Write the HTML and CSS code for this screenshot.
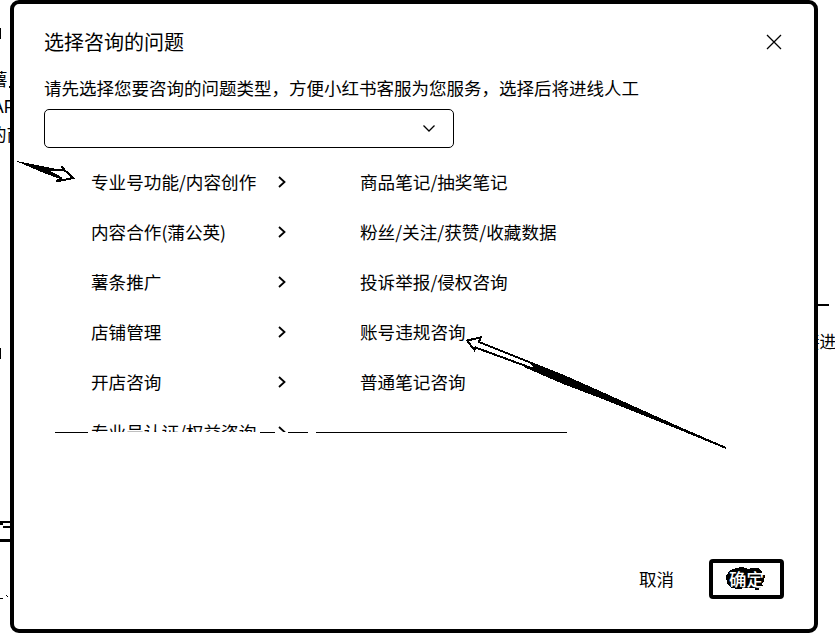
FILE: index.html
```html
<!DOCTYPE html>
<html lang="zh-CN">
<head>
<meta charset="utf-8">
<title>选择咨询的问题</title>
<link rel="stylesheet" href="styles.css">
</head>
<body>
<div class="backdrop">
  <span class="behind behind-a">薯，</span>
  <span class="behind behind-b">AP</span>
  <span class="behind behind-c">的商</span>
  <span class="behind behind-d">接进</span>
  <svg class="edges" viewBox="0 0 835 640" shape-rendering="crispEdges">
    <path d="M0 28h1v11h-1zM9 86h1v2H9zM0 348h1v11h-1zM0 521h10v2H0zM0 523h3v2H0zM3 526h7v2H3zM0 539h10v3H0zM0 598h3v1H0zM6 595h1v1H6zM7 596h1v1H7zM818 304h11v2h-11z"/>
  </svg>
</div>
<main class="dialog">
  <header class="head">
    <h1>选择咨询的问题</h1>
    <svg class="close" viewBox="0 0 16 16"><path d="M1 1l14 14M15 1L1 15"/></svg>
  </header>
  <p class="hint">请先选择您要咨询的问题类型，方便小红书客服为您服务，选择后将进线人工</p>
  <div class="select"><svg class="down" viewBox="0 0 12 7"><path d="M.5 .5L6 6L11.5 .5"/></svg></div>
  <div class="menu">
    <ul class="list primary">
      <li><span>专业号功能/内容创作</span><svg class="next" viewBox="0 0 8 12"><path d="M1 1l5.5 5L1 11"/></svg></li>
      <li><span>内容合作(蒲公英)</span><svg class="next" viewBox="0 0 8 12"><path d="M1 1l5.5 5L1 11"/></svg></li>
      <li><span>薯条推广</span><svg class="next" viewBox="0 0 8 12"><path d="M1 1l5.5 5L1 11"/></svg></li>
      <li><span>店铺管理</span><svg class="next" viewBox="0 0 8 12"><path d="M1 1l5.5 5L1 11"/></svg></li>
      <li><span>开店咨询</span><svg class="next" viewBox="0 0 8 12"><path d="M1 1l5.5 5L1 11"/></svg></li>
      <li><span>专业号认证/权益咨询</span><svg class="next" viewBox="0 0 8 12"><path d="M1 1l5.5 5L1 11"/></svg></li>
    </ul>
    <ul class="list secondary">
      <li>商品笔记/抽奖笔记</li>
      <li>粉丝/关注/获赞/收藏数据</li>
      <li>投诉举报/侵权咨询</li>
      <li>账号违规咨询</li>
      <li>普通笔记咨询</li>
    </ul>
  </div>
  <svg class="rule" viewBox="0 0 512 1" shape-rendering="crispEdges"><path d="M0 0h33v1H0zM205 0h15v1h-15zM233 0h20v1h-20zM261 0h251v1H261z"/></svg>
  <footer class="actions">
    <button class="cancel">取消</button>
    <button class="confirm">
      <svg class="blob" viewBox="0 0 40 24" shape-rendering="crispEdges"><path d="M4 3L10 1L16 0L22 2L25 1L33 1L36 5V8H39V11H38V14L36 16L37 20L33 21V23H29V21L20 21L12 22L5 21L1 16L0 9z"/></svg>
      <span>确定</span>
    </button>
  </footer>
</main>
<svg class="arrows" viewBox="0 0 835 640" shape-rendering="crispEdges">
  <path class="solid" d="M16 161L46 167L57 169L58 171L50 171L61 177L60 179L44 173L30 167z"/>
  <path class="line" d="M54 170L64 170.500L61.500 166L65 170.500L73 178L56.500 181.500L61 178L50 172"/>
  <path class="line" d="M534 364L479 342L480.500 337.500L467 340.500L474.500 350L475.500 347.500L534 369"/>
  <path class="solid" d="M524 359L563 374.500L600 391L640 409L680 427L726 447L726 449L680 430L640 414L600 398L563 384L524 367L534 367z"/>
</svg>
</body>
</html>
```
FILE: styles.css
```css
* { box-sizing: border-box; }
body {
  margin: 0;
  width: 835px;
  height: 640px;
  position: relative;
  overflow: hidden;
  background: #fff;
  color: #000;
  font-family: "Noto Sans CJK SC", sans-serif;
  font-size: 17.5px;
  font-weight: 400;
}
.backdrop { position: absolute; inset: 0; overflow: hidden; }
.behind { position: absolute; line-height: 26px; white-space: nowrap; }
.behind-a { left: -10px; top: 66px; }
.behind-b { left: -8px; top: 94px; font-family: "Liberation Sans", sans-serif; }
.behind-c { left: -11px; top: 121px; }
.behind-d { right: -1px; top: 328px; font-size: 16.5px; }
.edges { position: absolute; inset: 0; width: 835px; height: 640px; }

.dialog {
  position: relative;
  display: flex;
  flex-direction: column;
  width: 808px;
  height: 633px;
  margin-left: 10px;
  padding: 24px 30px 30px;
  border: 4px solid #000;
  border-radius: 9px;
  background: #fff;
}
.head { display: flex; justify-content: space-between; height: 30px; }
.head h1 { margin: 0; font-size: 20px; font-weight: 400; line-height: 28px; }
.close { width: 16px; height: 16px; margin: 6px 2px 0 0; }
.close path, .down path { fill: none; stroke: #000; stroke-width: 1.3; }
.hint { margin: 16px 0 8px; line-height: 27px; white-space: nowrap; }
.select {
  display: flex;
  flex: none;
  align-items: center;
  justify-content: flex-end;
  width: 410px;
  height: 39px;
  padding-right: 18px;
  border: 1px solid #000;
  border-radius: 5px;
}
.down { width: 12px; height: 7px; }
.menu {
  display: flex;
  flex: none;
  height: 284px;
  padding: 8px 0 0 47px;
  overflow: hidden;
  font-size: 17.6px;
}
.list { margin: 0; padding: 0; list-style: none; }
.list li { display: flex; align-items: center; height: 50px; white-space: nowrap; }
.primary { width: 269px; }
.primary li { justify-content: space-between; padding-right: 74px; }
.next { width: 8px; height: 12px; margin-top: 2px; }
.next path { fill: none; stroke: #000; stroke-width: 1.8; }
.rule { flex: none; width: 512px; height: 1px; margin-left: 11px; }
.actions {
  display: flex;
  align-items: center;
  justify-content: flex-end;
  gap: 35px;
  margin-top: auto;
}
button {
  padding: 0;
  border: 0;
  background: none;
  color: inherit;
  font: inherit;
}
.cancel { padding-bottom: 2px; }
.confirm {
  position: relative;
  width: 75px;
  height: 40px;
  padding-bottom: 2px;
  border: 4px solid #000;
  border-radius: 4px;
}
.confirm span { position: relative; color: #fff; font-weight: 500; }
.blob { position: absolute; left: 13px; top: 4px; width: 40px; height: 24px; }
.arrows { position: absolute; left: 0; top: 0; width: 835px; height: 640px; pointer-events: none; }
.arrows .line { fill: none; stroke: #000; stroke-width: 2; }
```
